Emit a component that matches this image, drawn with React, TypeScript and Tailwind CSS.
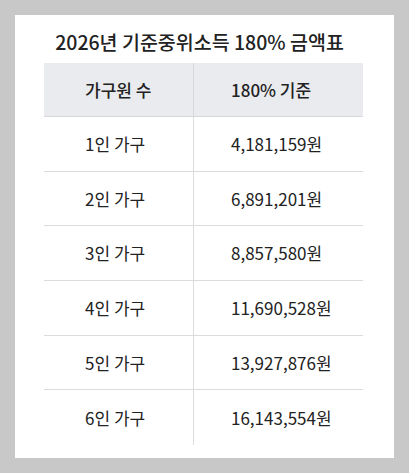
export default function App() {
  const rows = [
    { size: '1인 가구', amount: '4,181,159원' },
    { size: '2인 가구', amount: '6,891,201원' },
    { size: '3인 가구', amount: '8,857,580원' },
    { size: '4인 가구', amount: '11,690,528원' },
    { size: '5인 가구', amount: '13,927,876원' },
    { size: '6인 가구', amount: '16,143,554원' },
  ];

  return (
    <div
      className="w-[409px] h-[473px] bg-[#c8c8c8] pt-[15px] pl-[15px]"
      style={{ fontFamily: '"Noto Sans CJK KR", "Noto Sans", sans-serif' }}
    >
      <div className="w-[379px] h-[443px] bg-white pt-[15px]">
        <h2 className="text-[19.5px] leading-[24px] font-medium text-[#222] text-center pr-[10px] mb-[9px]">
          2026년 기준중위소득 180% 금액표
        </h2>
        <div className="ml-[29px] w-[319px] text-[17px] text-[#222]">
          <div className="flex h-[54px] bg-[#e9ebee] border-b border-[#d6d8db]">
            <div className="w-[150px] border-r border-[#d6d8db] flex items-center pl-[41px] font-medium">가구원 수</div>
            <div className="flex-1 flex items-center pl-[37px] font-medium">180% 기준</div>
          </div>
          {rows.map((row, i) => (
            <div
              key={i}
              className={`flex h-[54.7px] ${i < rows.length - 1 ? 'border-b border-[#dcdcdc]' : ''}`}
            >
              <div className="w-[150px] border-r border-[#dcdcdc] flex items-center pl-[41px]">{row.size}</div>
              <div className="flex-1 flex items-center pl-[37px]">{row.amount}</div>
            </div>
          ))}
        </div>
      </div>
    </div>
  );
}
